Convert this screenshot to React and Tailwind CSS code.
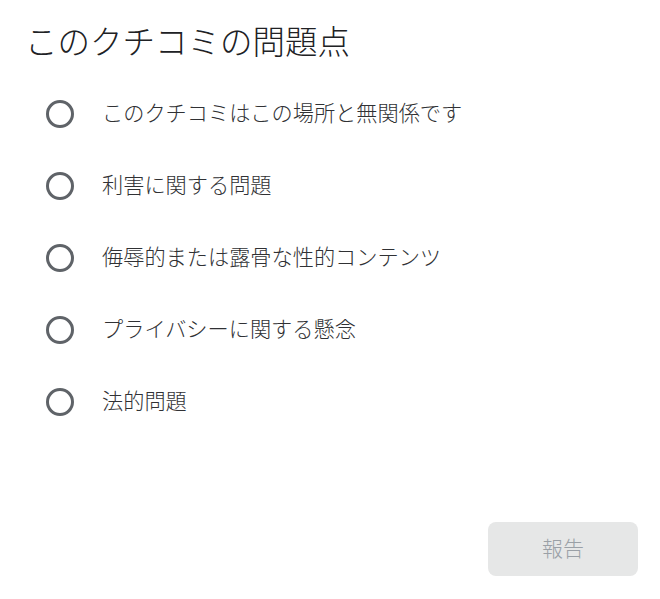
const reasons = [
  "このクチコミはこの場所と無関係です",
  "利害に関する問題",
  "侮辱的または露骨な性的コンテンツ",
  "プライバシーに関する懸念",
  "法的問題",
];

const font = {
  fontFamily: '"Noto Sans CJK JP", "Noto Sans", sans-serif',
};

export default function App() {
  return (
    <div
      className="w-[660px] h-[599px] bg-white flex flex-col"
      style={font}
    >
      {/* TITLE */}
      <h1 className="pl-[25px] pt-[21px] text-[32.5px] leading-[38px] text-[#202124] font-light">
        このクチコミの問題点
      </h1>

      {/* OPTIONS */}
      <div className="mt-[19px] flex flex-col">
        {reasons.map((r) => (
          <label
            key={r}
            className="h-[72px] flex items-center pl-[46px] cursor-pointer"
          >
            <span className="w-[28px] h-[28px] rounded-full border-[3px] border-[#5f6368] shrink-0" />
            <span className="ml-[28px] mb-[4px] text-[21.2px] leading-[28px] text-[#303134] font-light">
              {r}
            </span>
          </label>
        ))}
      </div>

      {/* FOOTER */}
      <div className="mt-auto flex justify-end pr-[22px] pb-[23px]">
        <button
          disabled
          className="w-[150px] h-[54px] rounded-[8px] bg-[#e6e7e7] text-[#9aa0a6] text-[21px] font-light pb-[3px]"
        >
          報告
        </button>
      </div>
    </div>
  );
}
